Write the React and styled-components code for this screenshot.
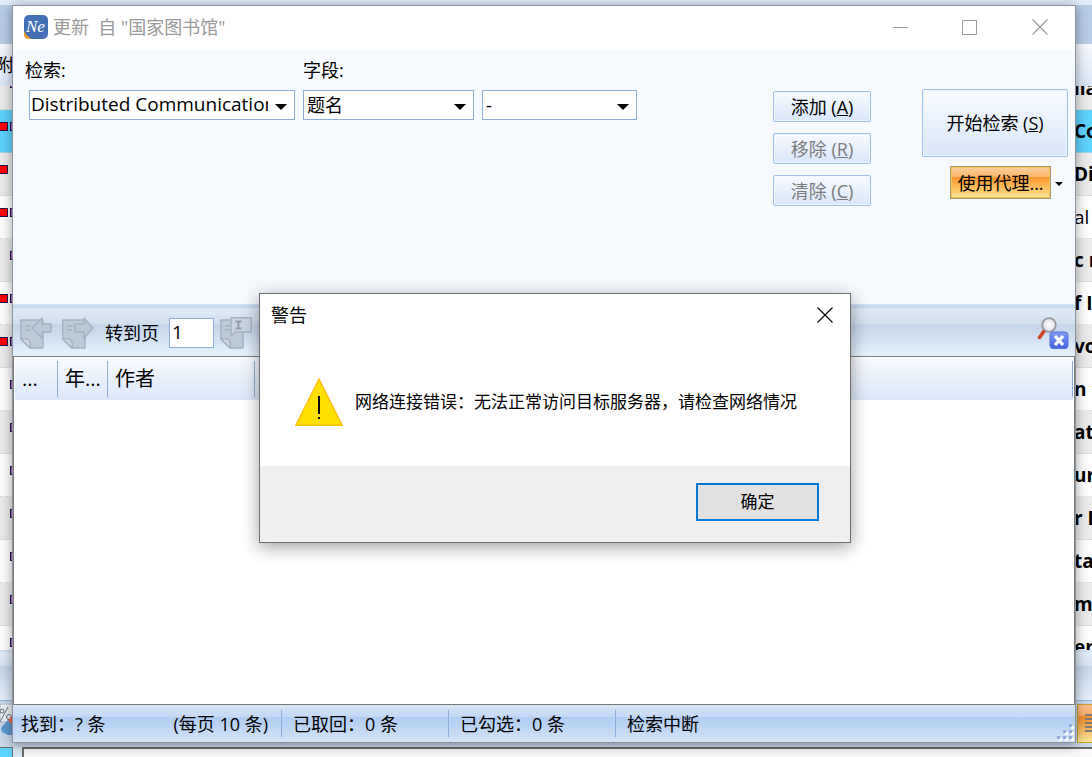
import React from "react";
import styled, { createGlobalStyle } from "styled-components";

const GlobalStyle = createGlobalStyle`
  *, *::before, *::after { box-sizing: border-box; }
  body { margin: 0; }
  body, button, input, select {
    font-family: "Open Sans", "Noto Sans CJK SC", sans-serif;
    font-size: 18px;
    line-height: 24px;
    color: #000;
  }
`;

const Desktop = styled.div`
  position: relative;
  display: grid;
  grid-template-columns: minmax(0, 1fr);
  grid-template-rows: minmax(0, 1fr);
  height: 100vh;
  min-height: 640px;
  overflow: hidden;
  > * { grid-area: 1 / 1; }
`;

/* ---------- main application behind the search window ---------- */

const Backdrop = styled.div`
  display: flex;
  flex-direction: column;
  min-height: 0;
  background: #dce9f8;
`;

const BackTop = styled.div`
  height: 5px;
  background: #dfecfa;
`;

const BackRibbon = styled.div`
  height: 39px;
  background: #b8cde8;
`;

const BackHeader = styled.div`
  height: 42px;
  padding: 9px 0;
  background: linear-gradient(#f7faff, #dbe7f9);
  overflow: hidden;
  white-space: nowrap;
`;

const BackHeaderText = styled.span`
  display: block;
  margin-left: -4px;
`;

const BackList = styled.div`
  flex: 1;
  min-height: 0;
  overflow: hidden;
  background: #fff;
`;

const ListBody = styled.div`
  margin-top: -19px;
`;

const BackRow = styled.div`
  display: flex;
  justify-content: space-between;
  align-items: center;
  height: 43px;
  background: ${(p) => (p.$selected ? "#5fd3ff" : p.$shaded ? "#ececec" : "#fff")};
  border-bottom: 1px dotted #d4d4d4;
`;

const Marks = styled.div`
  display: flex;
  gap: 2px;
  width: 13px;
  height: 9px;
  overflow: hidden;
  margin-bottom: 9px;
`;

const Mark = styled.span`
  flex: none;
  width: 8px;
  height: 9px;
  border: 1px solid #20104a;
  border-left-width: ${(p) => (p.$kind === "red" ? 0 : 1)}px;
  background: ${(p) => (p.$kind === "red" ? "#ff0000" : "#b068c8")};
  visibility: ${(p) => (p.$hidden ? "hidden" : "visible")};
`;

const RowText = styled.span`
  width: 18px;
  overflow: hidden;
  white-space: nowrap;
  font-size: 19px;
  font-weight: ${(p) => (p.$regular ? 400 : 700)};
`;

const BackStrip = styled.div`
  height: 51px;
  border-bottom: 1px solid #8fb4e4;
  background: linear-gradient(#c9dcf4 0, #e2edf9 3px, #d4e2f2 16px, #c5d7eb 16px, #e4effc 100%);
`;

const BackTools = styled.div`
  display: flex;
  justify-content: space-between;
  height: 46px;
  padding-top: 3px;
  background: #c9d8ea;
`;

const BackPanelRow = styled.div`
  display: flex;
  gap: 9px;
  height: 10px;
  background: #dbe8f6;
`;

const CyanCell = styled.div`
  width: 13px;
  border: 1px solid #6e6e6e;
  border-width: 1px 1px 0 0;
  background: #5fd3ff;
`;

const PanelEdge = styled.div`
  flex: 1;
  border: solid #6c6c6c;
  border-width: 2px 0 0 2px;
  background: #fafafa;
`;

/* ---------- search window ---------- */

const Window = styled.main`
  z-index: 1;
  display: flex;
  flex-direction: column;
  min-height: 0;
  margin: 5px 16px 14px 12px;
  border: 1px solid #8a939e;
  background: #f6faff;
  box-shadow: 0 2px 12px rgba(0, 0, 0, 0.38);
`;

const TitleBar = styled.header`
  display: flex;
  align-items: center;
  height: 44px;
  padding: 0 0 2px 11px;
  background: #fff;
  color: #999;
`;

const TitleText = styled.h1`
  flex: 1;
  margin: 0 0 0 5px;
  font-size: 18px;
  line-height: 24px;
  font-weight: 400;
  white-space: pre;
`;

const CaptionButton = styled.button`
  display: grid;
  place-items: center;
  width: ${(p) => (p.$small ? 50 : 70)}px;
  height: 42px;
  padding: 0;
  border: 0;
  background: transparent;
`;

const SearchForm = styled.form`
  display: flex;
  align-items: flex-start;
  height: 254px;
  padding: 8px 7px 0 12px;
`;

const Fields = styled.div`
  display: flex;
  align-items: flex-end;
  gap: 8px;
`;

const Field = styled.div`
  display: flex;
  flex-direction: column;
  align-items: flex-start;
  gap: 8px;
`;

const ComboBox = styled.div`
  display: flex;
  align-items: center;
  width: ${(p) => p.$width}px;
  height: 30px;
  margin-left: ${(p) => (p.$indent ? 4 : 0)}px;
  border: 1px solid #8caed8;
  background: #fff;
`;

const ArrowButton = styled.button`
  display: grid;
  place-items: center;
  width: 26px;
  height: 28px;
  padding: 4px 0 0;
  border: 0;
  background: transparent;
`;

const ComboInput = styled.input`
  flex: 1;
  min-width: 0;
  height: 28px;
  padding: 0 0 2px 1px;
  border: 0;
  outline: 0;
  background: transparent;
  font-size: 19px;
`;

const SelectWrap = styled.div`
  display: grid;
  align-items: center;
  width: ${(p) => p.$width}px;
  height: 30px;
  border: 1px solid #8caed8;
  background: #fff;
  > * { grid-area: 1 / 1; }
  > svg { justify-self: end; margin: 4px 7px 0 0; pointer-events: none; }
`;

const Select = styled.select`
  appearance: none;
  width: 100%;
  height: 28px;
  padding: 0 26px 0 3px;
  border: 0;
  border-radius: 0;
  outline: 0;
  background: transparent;
`;

const EditButtons = styled.div`
  display: flex;
  flex-direction: column;
  gap: 11px;
  width: 98px;
  margin: 33px 51px 0 auto;
`;

const RunButtons = styled.div`
  display: flex;
  flex-direction: column;
  align-items: flex-end;
  gap: 9px;
  width: 146px;
  margin-top: 31px;
`;

const BlueButton = styled.button`
  width: 100%;
  height: ${(p) => (p.$large ? 68 : 31)}px;
  padding: 0;
  border: 1px solid #9dbfec;
  border-radius: 2px;
  background: linear-gradient(#f8fbff, #d8e6fa);
  box-shadow: inset 0 0 0 1px #f0f6ff;
  white-space: nowrap;
  &:disabled { color: #7b7b7b; }
`;

const ProxyGroup = styled.div`
  display: flex;
  align-items: center;
`;

const ProxyButton = styled.button`
  width: 101px;
  height: 33px;
  padding: 0;
  border: 1px solid #a39576;
  box-shadow: inset 0 0 0 1px #f4c850;
  background: linear-gradient(#fbd0a0 0%, #fcb568 33%, #f9952e 34%, #fcbd5a 65%, #ffe69a 100%);
  white-space: nowrap;
`;

const DropButton = styled.button`
  display: grid;
  place-items: center;
  width: 17px;
  height: 33px;
  padding: 3px 2px 0 0;
  border: 0;
  background: transparent;
`;

const Toolbar = styled.div`
  display: flex;
  align-items: center;
  height: 52px;
  padding: 6px 6px 0 7px;
  background: linear-gradient(#d5e4f6 0, #c0d5ee 3px, #dfeaf6 5px, #d0deed 20px, #c3d5e9 21px, #cfdff0 32px, #e4f1ff 51px);
`;

const IconButton = styled.button`
  display: block;
  width: 32px;
  height: 32px;
  padding: 0;
  border: 0;
  margin-right: ${(p) => p.$gap || 0}px;
  margin-left: ${(p) => (p.$end ? "auto" : 0)};
  background: transparent;
`;

const PageLabel = styled.label`
  margin-right: 10px;
`;

const PageInput = styled.input`
  width: 45px;
  height: 30px;
  margin-right: 6px;
  padding: 0 2px 2px;
  border: 1px solid #8caed8;
  border-radius: 0;
  outline: 0;
  background: #fff;
  font-size: 19px;
`;

const Results = styled.div`
  flex: 1;
  min-height: 0;
  padding: 1px;
  border: 1px solid #7c7c7c;
  background: #fff;
  overflow: hidden;
`;

const ResultTable = styled.table`
  width: 100%;
  border-collapse: collapse;
  table-layout: fixed;
`;

const HeadRow = styled.tr`
  height: 42px;
  background: linear-gradient(#f8fafe, #dbe7f9);
`;

const HeadCell = styled.th`
  width: ${(p) => (p.$width ? `${p.$width}px` : "auto")};
  padding: 0 0 0 7px;
  background: linear-gradient(#8caed8, #8caed8) right center / 1px 36px no-repeat;
  font-size: 20px;
  font-weight: 400;
  text-align: left;
  white-space: nowrap;
`;

const StatusBar = styled.footer`
  display: flex;
  align-items: center;
  height: 37px;
  padding: 0 0 0 8px;
  background: linear-gradient(#d9e6f9 0, #c3d8f5 12px, #b0cdf3 12px, #bdd5f4 22px, #d5e4f7 100%);
  white-space: nowrap;
  > svg { align-self: flex-end; }
`;

const StatusItem = styled.div`
  display: flex;
  justify-content: space-between;
  align-items: center;
  width: ${(p) => p.$width}px;
  height: 27px;
  padding-right: 13px;
  margin-right: 11px;
  border-right: 1px solid #8caed8;
`;

const StatusLast = styled.div`
  flex: 1;
`;

/* ---------- warning dialog ---------- */

const Dialog = styled.section`
  position: absolute;
  z-index: 2;
  top: 293px;
  left: 50%;
  width: 592px;
  margin-left: -287px;
  border: 1px solid #707070;
  background: #fff;
  box-shadow: 0 4px 16px rgba(0, 0, 0, 0.38);
`;

const DialogHeader = styled.div`
  display: flex;
  justify-content: space-between;
  align-items: center;
  height: 42px;
  padding-left: 11px;
`;

const DialogTitle = styled.h2`
  margin: 0;
  font-size: 18px;
  line-height: 24px;
  font-weight: 400;
`;

const DialogBody = styled.div`
  display: flex;
  align-items: center;
  gap: 12px;
  height: 130px;
  padding: 2px 34px 0 35px;
`;

const DialogMessage = styled.p`
  margin: 0;
  font-size: 17px;
  white-space: nowrap;
`;

const DialogFooter = styled.div`
  display: flex;
  justify-content: flex-end;
  align-items: center;
  height: 76px;
  padding: 0 31px 4px;
  background: #efefef;
`;

const OkButton = styled.button`
  width: 123px;
  height: 38px;
  padding: 0;
  border: 2px solid #0078d7;
  background: #e1e1e1;
  font-size: 17px;
`;

/* ---------- drawings ---------- */

const Triangle = ({ size = 12 }) => (
  <svg width={size} height={size / 2} viewBox="0 0 12 6" aria-hidden="true">
    <path d="M0 0H12L6 6Z" fill="#000" />
  </svg>
);

const CloseGlyph = ({ color }) => (
  <svg width="16" height="16" viewBox="0 0 16 16" aria-hidden="true">
    <path d="M.5.5l15 15M15.5.5l-15 15" stroke={color} strokeWidth="1.1" fill="none" />
  </svg>
);

const AppLogo = () => (
  <svg width="24" height="24" viewBox="0 0 24 24" aria-hidden="true">
    <rect width="24" height="24" rx="5" fill="#456fb4" />
    <path d="M0 16C2 20 4 22 8 24H5Q0 24 0 19Z" fill="#f5a021" />
    <text x="2" y="17" fill="#fff" fontFamily="Liberation Serif, serif" fontStyle="italic" fontSize="17">Ne</text>
  </svg>
);

const Sheet = () => (
  <g fill="#bdcada" stroke="#a3b1c1" strokeWidth="1.4" strokeLinejoin="round">
    <path d="M.8 3H23V31H10L.8 22Z" />
    <path d="M.8 22Q6 21 9 23Q11 26 10 31Z" fill="#cbd7e5" />
    <path d="M5 9h6M5 13h5" fill="none" />
  </g>
);

const PageIcon = ({ kind }) => (
  <svg width="32" height="32" viewBox="0 0 32 32" aria-hidden="true">
    <Sheet />
    <g fill="#b9c7d7" stroke="#a3b1c1" strokeWidth="1.4" strokeLinejoin="round">
      {kind === "prev" && <path d="M12 11L22 1V7H31V15H22V21Z" />}
      {kind === "next" && <path d="M13 7H22V1L31 11L22 21V15H13Z" />}
      {kind === "goto" && (
        <>
          <path d="M11 .8H31.2V15H15L11 19Z" fill="#c9d5e3" />
          <path d="M15.500 4.500h6M15.500 11.500h6M18.500 4.500v7" strokeWidth="1.800" stroke="#8c9bad" />
        </>
      )}
    </g>
  </svg>
);

const ClearSearchIcon = () => (
  <svg width="32" height="32" viewBox="0 0 32 32" aria-hidden="true">
    <defs>
      <radialGradient id="lens">
        <stop offset="0" stopColor="#fff" />
        <stop offset="1" stopColor="#dde0e6" />
      </radialGradient>
      <linearGradient id="badge" x1="0" y1="0" x2="0" y2="1">
        <stop offset="0" stopColor="#7f9cf4" />
        <stop offset="1" stopColor="#4462dd" />
      </linearGradient>
    </defs>
    <path d="M7.500 13.500L2.500 20.500" stroke="#d2401f" strokeWidth="3.500" strokeLinecap="round" />
    <circle cx="12" cy="8" r="6.800" fill="url(#lens)" stroke="#96989c" strokeWidth="1.800" />
    <rect x="13" y="15" width="18" height="16.500" rx="3" fill="url(#badge)" stroke="#5673e6" />
    <path d="M18 19l8 9M26 19l-8 9" stroke="#fff" strokeWidth="3.200" />
  </svg>
);

const WarningIcon = () => (
  <svg width="48" height="48" viewBox="0 0 48 48" aria-hidden="true">
    <path d="M24 1L47.200 47.300H.8Z" fill="#fde000" stroke="#ffb900" strokeWidth="1.200" />
    <path d="M23 18h2v18h-2zM23 39h2v2h-2z" fill="#000" />
  </svg>
);

const ResizeGrip = () => (
  <svg width="18" height="18" viewBox="0 0 18 18" aria-hidden="true">
    {[[12, 0], [6, 6], [12, 6], [0, 12], [6, 12], [12, 12]].map(([x, y]) => (
      <g key={`${x}-${y}`}>
        <rect x={x + 2} y={y + 2} width="3" height="3" fill="#fff" />
        <rect x={x} y={y} width="3" height="3" fill="#8fadd8" />
      </g>
    ))}
  </svg>
);

const EraserIcon = () => (
  <svg width="13" height="40" viewBox="0 0 13 40" aria-hidden="true">
    <rect width="13" height="18" fill="#eef2f7" stroke="#a5b4c6" strokeWidth="1" />
    <path d="M0 18L8 3" stroke="#66727e" fill="none" />
    <circle cx="2" cy="7" r="2" fill="none" stroke="#66727e" />
    <circle cx="9" cy="13" r="2.500" fill="none" stroke="#66727e" />
    <path d="M1 24L8 16L13 21V31H8L2 28Z" fill="#5b98cc" />
    <path d="M8 16L13 11V22Z" fill="#e46450" />
  </svg>
);

const ListIcon = () => (
  <svg width="15" height="39" viewBox="0 0 15 39" aria-hidden="true">
    <defs>
      <linearGradient id="amber" x1="0" y1="0" x2="0" y2="1">
        <stop offset="0" stopColor="#fbc08c" />
        <stop offset="0.3" stopColor="#f9ad68" />
        <stop offset="0.320" stopColor="#f28c28" />
        <stop offset="1" stopColor="#ffea9c" />
      </linearGradient>
    </defs>
    <rect x="0.500" y="0.500" width="20" height="38" fill="url(#amber)" stroke="#c9a02c" />
    <path d="M8 11h7M8 15h7M8 19h7M8 23h7M8 27h7" stroke="#7b7b7b" strokeWidth="2" />
  </svg>
);

const rows = [
  { text: "lla", marks: "p" },
  { text: "Co", marks: "rp", selected: true },
  { text: "Di", marks: "r" },
  { text: "al", marks: "rp", regular: true },
  { text: "c r", marks: "p" },
  { text: "f I", marks: "rp" },
  { text: "vo", marks: "rp" },
  { text: "n t", marks: "p" },
  { text: "ati", marks: "p" },
  { text: "ur", marks: "p" },
  { text: "r In", marks: "p" },
  { text: "ta", marks: "p" },
  { text: "m", marks: "p" },
  { text: "en", marks: "p" },
];

export default function App() {
  return (
    <>
      <GlobalStyle />
      <Desktop>
        <Backdrop>
          <BackTop />
          <BackRibbon />
          <BackHeader><BackHeaderText>附</BackHeaderText></BackHeader>
          <BackList>
            <ListBody>
              {rows.map((row, i) => (
                <BackRow key={row.text} $selected={row.selected} $shaded={i % 2 === 0}>
                  <Marks>
                    <Mark $kind="red" $hidden={!row.marks.includes("r")} />
                    <Mark $kind="purple" $hidden={!row.marks.includes("p")} />
                  </Marks>
                  <RowText $regular={row.regular}>{row.text}</RowText>
                </BackRow>
              ))}
            </ListBody>
          </BackList>
          <BackStrip />
          <BackTools><EraserIcon /><ListIcon /></BackTools>
          <BackPanelRow><CyanCell /><PanelEdge /></BackPanelRow>
        </Backdrop>

        <Window>
          <TitleBar>
            <AppLogo />
            <TitleText>{'更新  自 "国家图书馆"'}</TitleText>
            <CaptionButton aria-label="最小化">
              <svg width="16" height="16" viewBox="0 0 16 16" aria-hidden="true"><path d="M1 8.500h15" stroke="#999" /></svg>
            </CaptionButton>
            <CaptionButton aria-label="最大化">
              <svg width="16" height="16" viewBox="0 0 16 16" aria-hidden="true"><path d="M.5 1.500h14v14H.5z" stroke="#999" fill="none" /></svg>
            </CaptionButton>
            <CaptionButton aria-label="关闭"><CloseGlyph color="#999" /></CaptionButton>
          </TitleBar>

          <SearchForm onSubmit={(e) => e.preventDefault()}>
            <Fields>
              <Field>
                <label htmlFor="query">检索:</label>
                <ComboBox $width={266} $indent>
                  <ComboInput id="query" defaultValue="Distributed Communication" />
                  <ArrowButton type="button" aria-label="展开"><Triangle /></ArrowButton>
                </ComboBox>
              </Field>
              <Field>
                <label htmlFor="field">字段:</label>
                <SelectWrap $width={171}>
                  <Select id="field"><option>题名</option></Select>
                  <Triangle />
                </SelectWrap>
              </Field>
              <SelectWrap $width={155}>
                <Select aria-label="条件"><option>-</option></Select>
                <Triangle />
              </SelectWrap>
            </Fields>
            <EditButtons>
              <BlueButton type="button">添加 (<u>A</u>)</BlueButton>
              <BlueButton type="button" disabled>移除 (<u>R</u>)</BlueButton>
              <BlueButton type="button" disabled>清除 (<u>C</u>)</BlueButton>
            </EditButtons>
            <RunButtons>
              <BlueButton type="submit" $large>开始检索 (<u>S</u>)</BlueButton>
              <ProxyGroup>
                <ProxyButton type="button">使用代理...</ProxyButton>
                <DropButton type="button" aria-label="代理选项"><Triangle size={8} /></DropButton>
              </ProxyGroup>
            </RunButtons>
          </SearchForm>

          <Toolbar>
            <IconButton disabled aria-label="上一页" $gap={10}><PageIcon kind="prev" /></IconButton>
            <IconButton disabled aria-label="下一页" $gap={11}><PageIcon kind="next" /></IconButton>
            <PageLabel htmlFor="page">转到页</PageLabel>
            <PageInput id="page" defaultValue="1" />
            <IconButton disabled aria-label="转到"><PageIcon kind="goto" /></IconButton>
            <IconButton $end aria-label="清除检索"><ClearSearchIcon /></IconButton>
          </Toolbar>

          <Results>
            <ResultTable>
              <thead>
                <HeadRow>
                  <HeadCell $width={43}>...</HeadCell>
                  <HeadCell $width={50}>年...</HeadCell>
                  <HeadCell $width={147}>作者</HeadCell>
                  <HeadCell />
                </HeadRow>
              </thead>
            </ResultTable>
          </Results>

          <StatusBar>
            <StatusItem $width={261}><span>找到：? 条</span><span>(每页 10 条)</span></StatusItem>
            <StatusItem $width={156}>已取回：0 条</StatusItem>
            <StatusItem $width={156}>已勾选：0 条</StatusItem>
            <StatusLast>检索中断</StatusLast>
            <ResizeGrip />
          </StatusBar>
        </Window>

        <Dialog role="alertdialog" aria-labelledby="warn-title" aria-describedby="warn-text">
          <DialogHeader>
            <DialogTitle id="warn-title">警告</DialogTitle>
            <CaptionButton $small aria-label="关闭"><CloseGlyph color="#000" /></CaptionButton>
          </DialogHeader>
          <DialogBody>
            <WarningIcon />
            <DialogMessage id="warn-text">网络连接错误：无法正常访问目标服务器，请检查网络情况</DialogMessage>
          </DialogBody>
          <DialogFooter><OkButton>确定</OkButton></DialogFooter>
        </Dialog>
      </Desktop>
    </>
  );
}
